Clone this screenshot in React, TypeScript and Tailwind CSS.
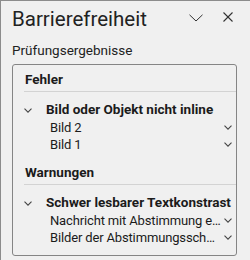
function SmallChevron({ className = '' }: { className?: string }) {
  return (
    <svg width="8" height="5" viewBox="0 0 8 5" fill="none" stroke="currentColor" strokeWidth="1.1" className={className}>
      <polyline points="0.5,0.7 4,4.2 7.5,0.7" />
    </svg>
  );
}

function Group({ title, issue, items }: { title: string; issue: string; items: string[] }) {
  return (
    <div className="flex flex-col">
      <div className="h-[20px] flex items-center pl-[12px] font-bold text-[13.5px] leading-none whitespace-nowrap">
        {title}
      </div>
      <div className="h-px bg-[#d3d3d3] ml-[11px] mt-[1px]" />
      <div className="flex items-center h-[18px] mt-[9px] pl-[11px] whitespace-nowrap">
        <SmallChevron className="text-[#444] shrink-0" />
        <span className="ml-[14px] font-bold text-[13.5px] leading-none">{issue}</span>
      </div>
      {items.map((t) => (
        <div key={t} className="flex items-center h-[17px] pl-[37px] pr-[4px]">
          <span className="flex-1 min-w-0 truncate text-[13px] leading-[16px] tracking-[-0.15px]">{t}</span>
          <SmallChevron className="ml-[3px] text-[#444] shrink-0" />
        </div>
      ))}
    </div>
  );
}

export default function App() {
  return (
    <div
      className="w-[250px] h-[260px] bg-[#f0f0f0] border-l border-t border-[#8c8c8c] text-[#1b1b1b] overflow-hidden"
      style={{ fontFamily: 'Roboto, "Liberation Sans", sans-serif' }}
    >
      <div className="flex items-center h-[34px] pl-[11px] pr-[17px]">
        <span className="text-[20.5px] leading-none flex-1 mt-[2px] text-[#222]">Barrierefreiheit</span>
        <svg width="14" height="8" viewBox="0 0 14 8" fill="none" stroke="#333" strokeWidth="1" className="mr-[20px] mt-[-1px]">
          <polyline points="0.5,0.8 7,7 13.5,0.8" />
        </svg>
        <svg width="10" height="10" viewBox="0 0 10 10" fill="none" stroke="#333" strokeWidth="1.1" className="mt-[-2px]">
          <line x1="0.5" y1="0.5" x2="9.5" y2="9.5" />
          <line x1="9.5" y1="0.5" x2="0.5" y2="9.5" />
        </svg>
      </div>
      <div className="pl-[11px] text-[13.5px] mt-[7px] leading-[16px] text-[#222]">Prüfungsergebnisse</div>
      <div className="ml-[11px] mr-[13px] mt-[6px] h-[192px] border border-[#858585] rounded-[3px] pt-[5px]">
        <Group title="Fehler" issue="Bild oder Objekt nicht inline" items={['Bild 2', 'Bild 1']} />
        <div className="h-[10px]" />
        <Group
          title="Warnungen"
          issue="Schwer lesbarer Textkonstrast"
          items={['Nachricht mit Abstimmung erforderlich', 'Bilder der Abstimmungsschaltflächen']}
        />
      </div>
    </div>
  );
}
